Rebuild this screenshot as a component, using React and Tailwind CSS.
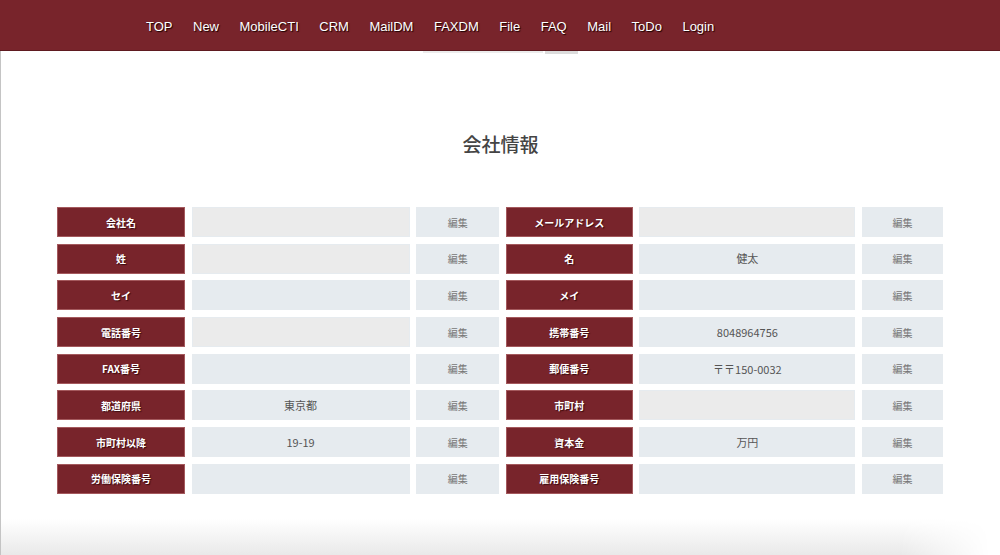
import React from "react";

const navItems = ["TOP", "New", "MobileCTI", "CRM", "MailDM", "FAXDM", "File", "FAQ", "Mail", "ToDo", "Login"];

// [label, value, empty-input]
const rows = [
  [["会社名", "", true], ["メールアドレス", "", true]],
  [["姓", "", true], ["名", "健太", false]],
  [["セイ", "", false], ["メイ", "", false]],
  [["電話番号", "", true], ["携帯番号", "8048964756", false]],
  [["FAX番号", "", false], ["郵便番号", "〒〒150-0032", false]],
  [["都道府県", "東京都", false], ["市町村", "", true]],
  [["市町村以降", "19-19", false], ["資本金", "万円", false]],
  [["労働保険番号", "", false], ["雇用保険番号", "", false]],
];

const jp = "font-['Noto_Sans_CJK_JP','Noto_Sans',sans-serif]";

const Label = ({ text }) => (
  <div
    className={`flex items-center justify-center bg-[#78242b] border border-[#a4595d] text-white text-[10px] font-bold [text-shadow:1px_1px_1px_#3a0a0e] ${jp}`}
  >
    {text}
  </div>
);

const Value = ({ text, empty }) => (
  <div className="flex bg-[#e6ebef] p-[1px]">
    <div
      className={`flex flex-1 items-center justify-center text-[11px] text-[#555555] ${jp} ${
        empty ? "bg-[#ebebeb]" : ""
      }`}
    >
      {text}
    </div>
  </div>
);

const Edit = () => (
  <div className={`flex items-center justify-center bg-[#e6ebef] text-[10px] text-[#777777] ${jp}`}>
    編集
  </div>
);

export default function App() {
  return (
    <div className="flex flex-col h-[555px] overflow-hidden bg-white">
      {/* Header */}
      <header className="h-[51px] shrink-0 bg-[#78242b] border-b border-[#5f1a20] flex items-center pt-[2px] pl-[146px] gap-[20.5px] font-['Liberation_Sans',Arial,sans-serif] text-[13px] text-white [text-shadow:1px_1px_1px_#1a0000]">
        {navItems.map((item) => (
          <a key={item} href="#" className="leading-none">
            {item}
          </a>
        ))}
      </header>

      <main className="flex flex-col flex-1 border-l border-[#c4c4c4]">
        <div className="flex h-[3px] ml-[422px] gap-[2px]">
          <div className="w-[120px] h-[2px] bg-[#ececec]" />
          <div className="w-[33px] h-[3px] bg-[#dcdcdc]" />
        </div>

        <h1 className={`mt-[80px] text-center text-[19px] font-medium text-[#444444] leading-none ${jp}`}>
          会社情報
        </h1>

        <div className="mt-[54px] ml-[56px] grid grid-cols-[128px_218px_83px_127px_216px_81px] gap-x-[6.6px] gap-y-[6.7px] auto-rows-[30px]">
          {rows.map(([left, right], i) => (
            <React.Fragment key={i}>
              <Label text={left[0]} />
              <Value text={left[1]} empty={left[2]} />
              <Edit />
              <Label text={right[0]} />
              <Value text={right[1]} empty={right[2]} />
              <Edit />
            </React.Fragment>
          ))}
        </div>

        <div className="mt-auto h-[36px] bg-gradient-to-b from-white to-[#e9e9e9] [mask-image:linear-gradient(to_right,black_90%,transparent_99%)]" />
      </main>
    </div>
  );
}
